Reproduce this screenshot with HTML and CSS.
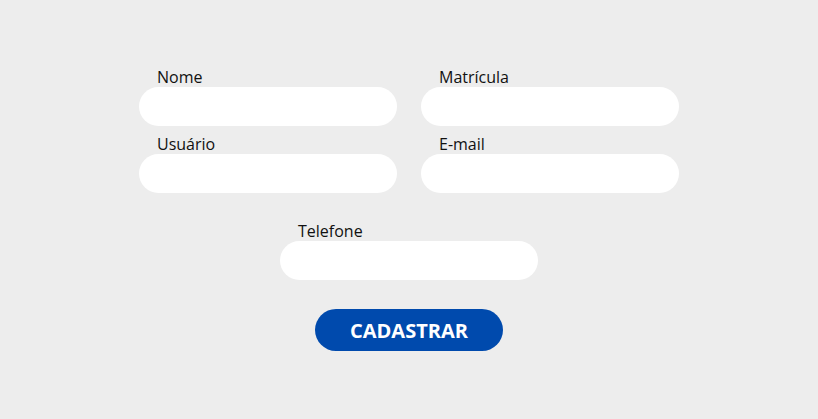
FILE: index.html
```html
<!DOCTYPE html>
<html lang="pt-BR">
<head>
<meta charset="utf-8">
<title>Cadastro</title>
<link rel="stylesheet" href="styles.css">
</head>
<body>
<main class="page">
  <form class="form">
    <div class="grid">
      <label class="field">
        <span class="label">Nome</span>
        <input class="input" type="text">
      </label>
      <label class="field">
        <span class="label">Matrícula</span>
        <input class="input" type="text">
      </label>
      <label class="field">
        <span class="label">Usuário</span>
        <input class="input" type="text">
      </label>
      <label class="field">
        <span class="label">E-mail</span>
        <input class="input" type="email">
      </label>
    </div>
    <label class="field field-center">
      <span class="label">Telefone</span>
      <input class="input" type="tel">
    </label>
    <button class="button" type="button">CADASTRAR</button>
  </form>
</main>
</body>
</html>
```
FILE: styles.css
```css
* { box-sizing: border-box; }
html, body { margin: 0; padding: 0; }
body {
  background: #ededed;
  font-family: "Open Sans", "Liberation Sans", sans-serif;
  color: #111;
}
.page {
  min-height: 100vh;
  padding-bottom: 1px;
  display: flex;
  align-items: center;
  justify-content: center;
}
.form {
  display: flex;
  flex-direction: column;
  align-items: center;
}
.grid {
  display: grid;
  grid-template-columns: 258px 258px;
  column-gap: 24px;
  row-gap: 8px;
}
.field {
  display: flex;
  flex-direction: column;
  width: 258px;
}
.field-center { margin-top: 28px; }
.label {
  display: block;
  font-size: 16px;
  line-height: 20px;
  padding-left: 18px;
}
.input {
  display: block;
  width: 258px;
  height: 39px;
  border: none;
  border-radius: 19.5px;
  background: #fff;
  outline: none;
  padding: 0 18px;
  font: inherit;
}
.button {
  margin-top: 29px;
  width: 188px;
  height: 42px;
  border: none;
  border-radius: 21px;
  background: #004aad;
  color: #fff;
  font-family: "Open Sans", "Liberation Sans", sans-serif;
  font-weight: 700;
  font-size: 20px;
  padding: 0;
  cursor: pointer;
}
```
